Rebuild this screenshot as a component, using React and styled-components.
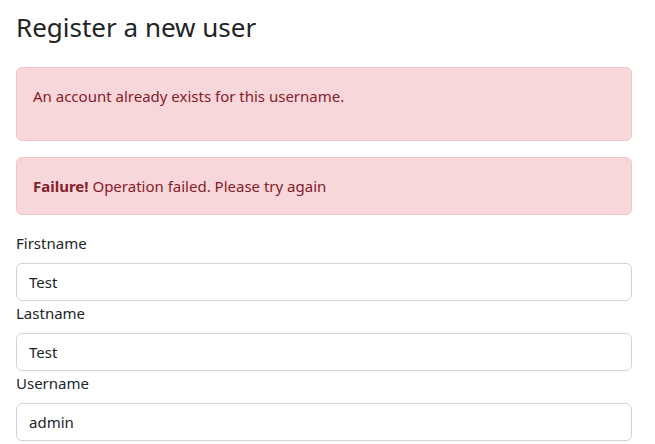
import React from 'react';
import styled, { createGlobalStyle } from 'styled-components';

const GlobalStyle = createGlobalStyle`
  body {
    margin: 0;
    background: #fff;
    font-family: "Noto Sans", "Liberation Sans", sans-serif;
    font-size: 15px;
    line-height: 24px;
    color: #212529;
  }
  * { box-sizing: border-box; }
`;

const Page = styled.div`
  padding: 11px 23px 0 16px;
`;

const Title = styled.h2`
  margin: 0 0 24px;
  font-size: 26px;
  font-weight: 400;
  line-height: 32px;
`;

const Alert = styled.div`
  margin-bottom: 16px;
  padding: 16px;
  border: 1px solid #f5c2c7;
  border-radius: 6px;
  background: #f8d7da;
  color: #842029;

  p { margin: 0 0 16px; }
  strong { font-weight: 700; }
`;

const Field = styled.div`
  display: flex;
  flex-direction: column;
`;

const Label = styled.label`
  margin-bottom: 8px;
`;

const Input = styled.input`
  display: block;
  width: 100%;
  height: 38px;
  padding: 6px 12px;
  border: 1px solid #ced4da;
  border-radius: 6px;
  font: inherit;
  color: #212529;
  background: #fff;
  outline: none;
`;

const fields = [
  { id: 'firstname', label: 'Firstname', value: 'Test' },
  { id: 'lastname', label: 'Lastname', value: 'Test' },
  { id: 'username', label: 'Username', value: 'admin' },
];

const App = () => {
  return (
    <Page>
      <GlobalStyle />
      <Title>Register a new user</Title>
      <Alert>
        <p>An account already exists for this username.</p>
      </Alert>
      <Alert>
        <strong>Failure!</strong> Operation failed. Please try again
      </Alert>
      <form>
        {fields.map((f) => (
          <Field key={f.id}>
            <Label htmlFor={f.id}>{f.label}</Label>
            <Input id={f.id} defaultValue={f.value} />
          </Field>
        ))}
      </form>
    </Page>
  );
};

export default App;
